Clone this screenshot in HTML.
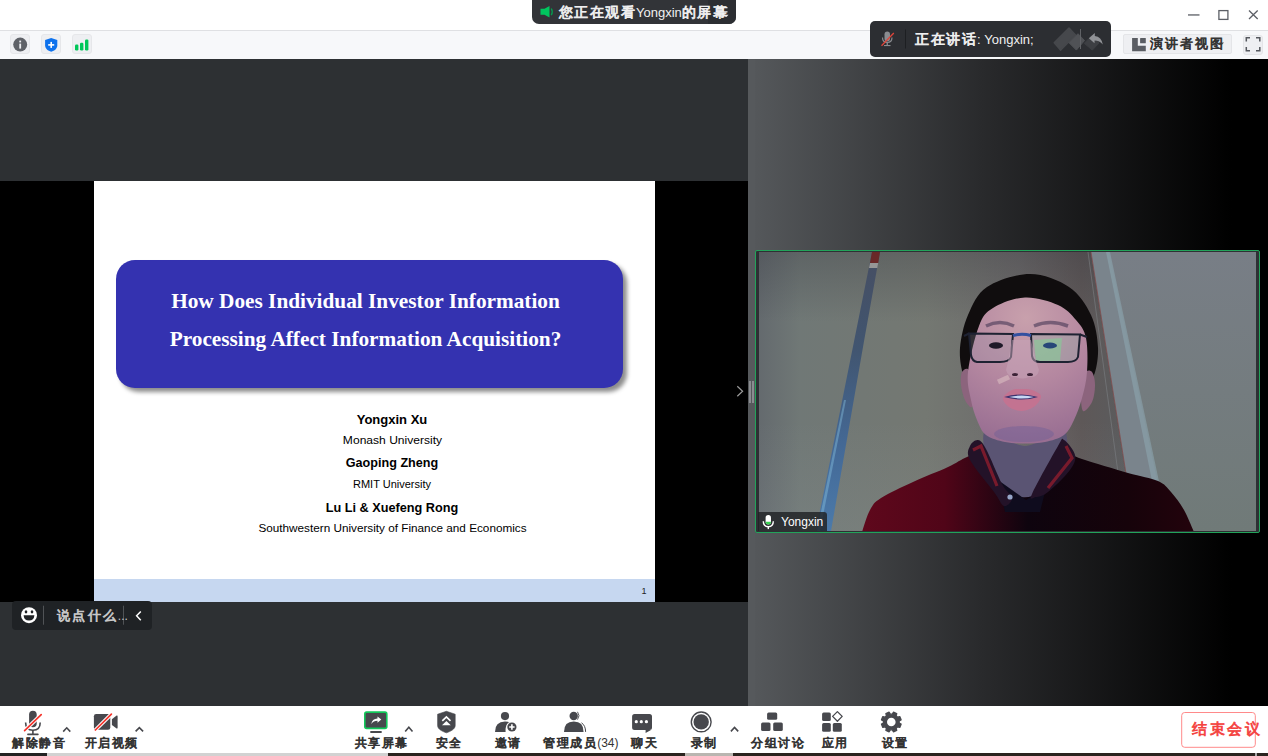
<!DOCTYPE html>
<html><head><meta charset="utf-8">
<style>
*{box-sizing:border-box;margin:0;padding:0}
html,body{width:1268px;height:756px;overflow:hidden;background:#fff;font-family:"Liberation Sans",sans-serif}
.a{position:absolute}
.cjk{white-space:nowrap}
.cjk span[style*="letter-spacing"]{-webkit-text-stroke:.75px currentColor}
</style></head>
<body>
<!-- title bar -->
<div class="a" style="left:0;top:0;width:1268px;height:30px;background:#fff"></div>
<div class="a" style="left:0;top:30px;width:1268px;height:1px;background:#dfe0e3"></div>
<div class="a" style="left:0;top:31px;width:1268px;height:28px;background:#f7f8fa"></div>
<!-- toolbar icons -->
<div class="a" style="left:10px;top:34px;width:20px;height:20px;background:#eeeff2;border:1px solid #e6e7ea;border-radius:3px"></div>
<div class="a" style="left:41px;top:34px;width:20px;height:20px;background:#eeeff2;border:1px solid #e6e7ea;border-radius:3px"></div>
<div class="a" style="left:72px;top:34px;width:20px;height:20px;background:#eeeff2;border:1px solid #e6e7ea;border-radius:3px"></div>
<svg class="a" style="left:0;top:0" width="120" height="60">
  <circle cx="20.2" cy="44.6" r="7" fill="#5f6268"/>
  <rect x="19.3" y="43.6" width="1.8" height="5" fill="#eeeff2"/>
  <rect x="19.3" y="40.6" width="1.8" height="1.8" fill="#eeeff2"/>
  <path d="M51.2 38 L57.3 40 L57.3 45.5 C57.3 48.5 54.5 50.8 51.2 51.7 C47.9 50.8 45.1 48.5 45.1 45.5 L45.1 40 Z" fill="#0e72ed"/>
  <rect x="48.2" y="44.1" width="6" height="1.6" fill="#fff"/>
  <rect x="50.4" y="41.9" width="1.6" height="6" fill="#fff"/>
  <rect x="75" y="44.6" width="3.4" height="5.8" rx="1.2" fill="#00c759"/>
  <rect x="80" y="42.8" width="3.4" height="7.6" rx="1.2" fill="#00c759"/>
  <rect x="85" y="39.6" width="3.4" height="10.8" rx="1.2" fill="#00c759"/>
</svg>
<!-- title pill -->
<div class="a" style="left:532px;top:0;width:204px;height:24px;background:#323438;border-radius:0 0 7px 7px;overflow:hidden">
  <div class="a" style="left:176px;top:0;width:28px;height:24px;background:#2c2e32"></div>
</div>
<svg class="a" style="left:532px;top:0" width="204" height="24">
  <path d="M8.5 8.8 H12.5 L17.5 6 V17.6 L12.5 14.8 H8.5 Z" fill="#00c65e"/>
  <path d="M19.3 8.5 Q21.2 11.8 19.3 15.1" stroke="#00a050" stroke-width="1.3" fill="none"/>
  <path d="M21.5 7.2 Q24 11.8 21.5 16.4" stroke="#0a7a3e" stroke-width="1" fill="none" opacity=".0"/>
  <rect x="185.5" y="7" width="10" height="1.3" fill="#e8e8e8"/>
  <rect x="185.5" y="11.2" width="10" height="1.3" fill="#e8e8e8"/>
  <rect x="185.5" y="15.3" width="6" height="1.3" fill="#e8e8e8"/>
  <path d="M192.5 14.8 H196.5 L194.5 17 Z" fill="#e8e8e8"/>
</svg>
<div class="a cjk" style="left:559px;top:3.5px;height:16px;font-size:14px;line-height:16px;color:#f0f0f0"><span style="letter-spacing:1.4px">您正在观看</span><span style="font-size:13px">Yongxin</span><span style="letter-spacing:1.4px">的屏幕</span></div>
<!-- window controls -->
<svg class="a" style="left:1180px;top:0" width="88" height="30">
  <rect x="8" y="14.3" width="11.5" height="1.3" fill="#5c5f66"/>
  <rect x="38.9" y="10.6" width="9" height="8.8" fill="none" stroke="#5c5f66" stroke-width="1.3"/>
  <path d="M69 10.5 L77.7 19 M77.7 10.5 L69 19" stroke="#5c5f66" stroke-width="1.3"/>
</svg>
<!-- speaking tooltip -->
<div class="a" style="left:870px;top:21px;width:241px;height:36px;background:#2c2e32;border-radius:5px"></div>
<svg class="a" style="left:870px;top:21px" width="241" height="36">
  <rect x="14.5" y="10.5" width="5.5" height="10" rx="2.75" fill="#8a8c90"/>
  <path d="M12.5 16.5 Q12.5 21.5 17.25 21.5 Q22 21.5 22 16.5" stroke="#8a8c90" stroke-width="1.2" fill="none"/>
  <rect x="16.6" y="21.5" width="1.3" height="2.6" fill="#8a8c90"/>
  <rect x="14" y="24" width="6.5" height="1.1" fill="#8a8c90"/>
  <path d="M11.5 24.8 L23.8 12" stroke="#e0453a" stroke-width="1.3"/>
  <rect x="35" y="8.5" width="1" height="19" fill="#1d1f22"/>
  <path d="M184.2 21.7 L199 7 L205.5 14 L190.5 29.1 Z" fill="#46484c" stroke="#46484c" stroke-width="1.5" stroke-linejoin="round"/>
  <path d="M199 21.7 L208 12.7 L214.5 19.5 L206.4 29.1 Z" fill="#505256" stroke="#505256" stroke-width="1" stroke-linejoin="round"/>
  <path d="M214.3 22.3 L222 14.5 L229 22 L222.3 29.1 Z" fill="#3d3f43" stroke="#3d3f43" stroke-width="1" stroke-linejoin="round"/>
  <rect x="210" y="8" width="1" height="20" fill="#606266"/>
  <path d="M218.9 17.2 L224.8 12 L224.8 15 Q231.5 15.8 232.8 23.4 Q229.5 19.8 224.6 19.6 L224.5 22.3 Z" fill="#909296"/>
</svg>
<div class="a cjk" style="left:915px;top:31px;height:16px;font-size:14px;line-height:16px;color:#f0f0f0"><span style="letter-spacing:1.5px">正在讲话</span><span style="font-size:13px">: Yongxin;</span></div>
<!-- speaker view button -->
<div class="a" style="left:1123px;top:34px;width:109px;height:20px;background:#eeeff2;border:1px solid #e4e5e8;border-radius:2px"></div>
<svg class="a" style="left:1123px;top:34px" width="109" height="20">
  <path d="M9.1 3.9 H14.8 V11.8 H22.8 V17.3 H9.1 Z" fill="#5a5d63"/>
  <rect x="17.1" y="3.9" width="5.7" height="5.3" rx=".5" fill="#5a5d63"/>
  <path d="M95.5 8.4 H101 L98.25 11.6 Z" fill="#4f5258"/>
</svg>
<div class="a cjk" style="left:1149.5px;top:35.5px;height:16px;font-size:13px;line-height:16px;color:#333"><span style="letter-spacing:2.2px">演讲者视图</span></div>
<!-- fullscreen button -->
<div class="a" style="left:1243px;top:34.5px;width:20px;height:20px;background:#eeeff2;border:1px solid #e4e5e8;border-radius:3px"></div>
<svg class="a" style="left:1243px;top:34px" width="20" height="20">
  <path d="M3.3 7.5 V3.8 H7 M13 3.8 H16.8 V7.5 M16.8 13 V16.8 H13 M7 16.8 H3.3 V13" stroke="#55585e" stroke-width="1.5" fill="none"/>
</svg>

<!-- main left panel -->
<div class="a" style="left:0;top:59px;width:748px;height:647px;background:#2d3033"></div>
<div class="a" style="left:0;top:181px;width:748px;height:421px;background:#000"></div>
<!-- slide -->
<div class="a" id="slide" style="left:93.5px;top:181px;width:561px;height:421px;background:#fff;overflow:hidden">
  <div class="a" style="left:22.5px;top:79px;width:507px;height:128px;background:#3432b0;border-radius:19px;box-shadow:4px 4px 4px rgba(0,0,0,.45)"></div>
  <div class="a" style="left:-8.7px;top:100.5px;width:561px;text-align:center;color:#fff;font:bold 21.5px/38.6px 'Liberation Serif',serif;white-space:nowrap;transform:scaleX(.99)">How Does Individual Investor Information<br>Processing Affect Information Acquisition?</div>
  <div class="a" style="left:18px;top:0;width:561px;text-align:center;color:#000;white-space:nowrap">
    <div class="a" style="left:0;top:230.5px;width:561px;font:bold 13px 'Liberation Sans'">Yongxin Xu</div>
    <div class="a" style="left:0;top:253px;width:561px;font:11.3px 'Liberation Sans';transform:scaleX(1.068)">Monash University</div>
    <div class="a" style="left:0;top:274.5px;width:561px;font:bold 12.6px 'Liberation Sans'">Gaoping Zheng</div>
    <div class="a" style="left:0;top:296.5px;width:561px;font:11px 'Liberation Sans'">RMIT University</div>
    <div class="a" style="left:0;top:319.5px;width:561px;font:bold 12.7px 'Liberation Sans'">Lu Li &amp; Xuefeng Rong</div>
    <div class="a" style="left:0;top:341px;width:561px;font:11.3px 'Liberation Sans';transform:scaleX(1.039)">Southwestern University of Finance and Economics</div>
  </div>
  <div class="a" style="left:0;top:398px;width:561px;height:23px;background:#c6d7f0"></div>
  <div class="a" style="left:548px;top:405px;font:9px 'Liberation Sans';color:#222">1</div>
</div>

<!-- chat bar -->
<div class="a" style="left:12px;top:601px;width:140px;height:29px;background:#1f2225;border-radius:4px"></div>
<svg class="a" style="left:12px;top:601px" width="140" height="29">
  <circle cx="17" cy="14.2" r="8" fill="#fff"/>
  <ellipse cx="14" cy="10.8" rx="1.3" ry="1.6" fill="#1f2225"/>
  <ellipse cx="20" cy="10.8" rx="1.3" ry="1.6" fill="#1f2225"/>
  <path d="M11.6 14.3 H22.4 Q22 19.6 17 19.6 Q12 19.6 11.6 14.3 Z" fill="#1f2225"/>
  <rect x="31" y="4.7" width="1" height="19" fill="#505356"/>
  <rect x="111" y="4.7" width="1" height="19" fill="#505356"/>
  <path d="M128.8 10.4 L124.6 14.8 L128.8 19.2" fill="none" stroke="#fff" stroke-width="1.5"/>
</svg>
<div class="a cjk" style="left:57.4px;top:608.5px;font-size:13px;line-height:14px;color:#c8c8c8"><span style="letter-spacing:2.1px">说点什么</span><span style="font-size:12px">...</span></div>

<!-- right panel -->
<div class="a" style="left:748px;top:59px;width:520px;height:647px;background:linear-gradient(to right,#56595c 0%,#292a2c 45%,#000 93%)"></div>
<div class="a" style="left:748px;top:59px;width:7px;height:647px;background:#56595c"></div>
<div class="a" style="left:749px;top:380.5px;width:2px;height:22px;background:#8a8c90"></div>
<div class="a" style="left:752px;top:380.5px;width:2px;height:22px;background:#8a8c90"></div>
<svg class="a" style="left:735px;top:380px" width="12" height="22">
  <path d="M2.3 6.2 L7.6 11.2 L2.3 16.2" fill="none" stroke="#9a9a9a" stroke-width="1.2"/>
</svg>
<!-- video -->
<div class="a" style="left:755px;top:250px;width:505px;height:283px;border:1px solid #22a35a;border-radius:2px;background:#2e3034"></div>
<div class="a" id="vid" style="left:759px;top:252px;width:497px;height:279px;overflow:hidden;background:#7e807a">
<svg width="497" height="279" viewBox="759 252 497 279" style="display:block">
  <defs>
    <linearGradient id="wallL" x1="759" x2="1130" y1="0" y2="0" gradientUnits="userSpaceOnUse">
      <stop offset="0" stop-color="rgb(100,106,110)"/>
      <stop offset=".11" stop-color="rgb(112,120,118)"/>
      <stop offset=".45" stop-color="rgb(116,120,114)"/>
      <stop offset=".7" stop-color="rgb(108,106,106)"/>
      <stop offset=".87" stop-color="rgb(94,88,88)"/>
      <stop offset="1" stop-color="rgb(90,92,94)"/>
    </linearGradient>
    <linearGradient id="wallV" x1="0" x2="0" y1="252" y2="531" gradientUnits="userSpaceOnUse">
      <stop offset="0" stop-color="rgb(40,40,50)" stop-opacity=".25"/>
      <stop offset=".25" stop-color="rgb(40,40,50)" stop-opacity="0"/>
      <stop offset=".6" stop-color="rgb(200,210,220)" stop-opacity="0"/>
      <stop offset="1" stop-color="rgb(200,215,220)" stop-opacity=".07"/>
    </linearGradient>
    <linearGradient id="pole" x1="0" x2="0" y1="252" y2="531" gradientUnits="userSpaceOnUse">
      <stop offset="0" stop-color="rgb(70,78,98)"/>
      <stop offset=".35" stop-color="rgb(65,85,112)"/>
      <stop offset=".7" stop-color="rgb(68,105,150)"/>
      <stop offset="1" stop-color="rgb(75,122,170)"/>
    </linearGradient>
    <radialGradient id="face" cx="1026" cy="318" r="130" gradientUnits="userSpaceOnUse">
      <stop offset="0" stop-color="rgb(200,160,172)"/>
      <stop offset=".5" stop-color="rgb(180,135,160)"/>
      <stop offset="1" stop-color="rgb(150,108,145)"/>
    </radialGradient>
    <linearGradient id="sweater" x1="862" x2="1194" y1="0" y2="0" gradientUnits="userSpaceOnUse">
      <stop offset="0" stop-color="rgb(95,8,28)"/>
      <stop offset=".25" stop-color="rgb(80,5,24)"/>
      <stop offset=".5" stop-color="rgb(14,4,14)"/>
      <stop offset=".8" stop-color="rgb(22,3,10)"/>
      <stop offset="1" stop-color="rgb(35,3,12)"/>
    </linearGradient>
    <linearGradient id="wallR" x1="0" x2="0" y1="252" y2="531" gradientUnits="userSpaceOnUse">
      <stop offset="0" stop-color="rgb(120,126,134)"/>
      <stop offset="1" stop-color="rgb(112,122,120)"/>
    </linearGradient>
  </defs>
  <rect x="759" y="252" width="497" height="279" fill="url(#wallL)"/>
  <rect x="759" y="252" width="497" height="279" fill="url(#wallV)"/>
  <!-- right wall -->
  <path d="M1091 252 H1256 V531 H1150 L1127 480 Z" fill="url(#wallR)"/>
  <path d="M1091 252 L1109 252 L1158 484 L1127 480 Z" fill="rgb(122,132,140)"/>
  <path d="M1106 252 L1110 252 L1160 486 L1153 486 Z" fill="rgb(140,165,175)" opacity=".6"/>
  <path d="M1091 252 L1127 480" stroke="rgb(130,70,70)" stroke-width="1" opacity=".7"/>
  <path d="M1088 252 L1119 480" stroke="rgb(125,128,132)" stroke-width="1" opacity=".6"/>
  <!-- pole -->
  <path d="M872 252 L880 252 L863.7 343 L831 531 L816 531 L853.7 343 Z" fill="url(#pole)"/>
  <path d="M872 252 L880 252 L878.2 263 L870 263 Z" fill="rgb(105,40,40)"/>
  <path d="M870 263 L878.2 263 L877.3 268 L869 268 Z" fill="rgb(150,150,150)"/>
  <path d="M817 531 L820 531 L846 400 L844 400 Z" fill="rgb(140,200,230)" opacity=".4"/>
  <!-- sweater -->
  <path d="M862.0 532.0 C863.3 528.3 866.8 515.7 870.0 510.0 C873.2 504.3 873.8 502.7 881.0 498.0 C888.2 493.3 901.8 487.2 913.0 482.0 C924.2 476.8 939.0 471.2 948.0 467.0 C957.0 462.8 960.8 459.5 967.0 457.0 C973.2 454.5 975.3 452.8 985.0 452.0 C994.7 451.2 1012.2 452.0 1025.0 452.0 C1037.8 452.0 1052.5 450.8 1062.0 452.0 C1071.5 453.2 1071.0 455.5 1082.0 459.0 C1093.0 462.5 1115.3 469.3 1128.0 473.0 C1140.7 476.7 1150.8 477.8 1158.0 481.0 C1165.2 484.2 1166.7 487.2 1171.0 492.0 C1175.3 496.8 1180.2 503.3 1184.0 510.0 C1187.8 516.7 1192.3 528.3 1194.0 532.0 L1194 540 L862 540 Z" fill="url(#sweater)"/>
  <!-- neck -->
  <path d="M986.0 430.0 C992.2 426.8 1012.0 446.0 1025.0 446.0 C1038.0 446.0 1057.8 426.0 1064.0 430.0 C1070.2 434.0 1066.0 459.7 1062.0 470.0 C1058.0 480.3 1046.8 487.5 1040.0 492.0 C1033.2 496.5 1027.3 498.2 1021.0 497.0 C1014.7 495.8 1007.5 490.3 1002.0 485.0 C996.5 479.7 990.7 474.2 988.0 465.0 C985.3 455.8 979.8 433.2 986.0 430.0 Z" fill="rgb(90,84,115)"/>
  <!-- shirt under V -->
  <path d="M998 480 L1026 500 L1046 488 L1040 512 L1005 512 Z" fill="rgb(15,12,30)"/>
  <!-- collars -->
  <path d="M970.0 446.0 C971.3 442.7 975.3 439.5 978.0 440.0 C980.7 440.5 982.0 441.7 986.0 449.0 C990.0 456.3 997.7 475.8 1002.0 484.0 C1006.3 492.2 1011.7 494.3 1012.0 498.0 C1012.3 501.7 1007.0 507.0 1004.0 506.0 C1001.0 505.0 999.7 499.7 994.0 492.0 C988.3 484.3 974.0 467.7 970.0 460.0 C966.0 452.3 968.7 449.3 970.0 446.0 Z" fill="rgb(35,18,40)"/>
  <path d="M1064.0 440.0 C1066.8 441.5 1074.0 450.0 1075.0 455.0 C1076.0 460.0 1074.5 463.8 1070.0 470.0 C1065.5 476.2 1053.7 487.5 1048.0 492.0 C1042.3 496.5 1038.7 496.7 1036.0 497.0 C1033.3 497.3 1028.3 502.5 1032.0 494.0 C1035.7 485.5 1052.7 455.0 1058.0 446.0 C1063.3 437.0 1061.2 438.5 1064.0 440.0 Z" fill="rgb(35,18,40)"/>
  <path d="M973 450 L981 446 L997 486" fill="none" stroke="rgb(150,30,45)" stroke-width="3.2" opacity=".75"/>
  <path d="M1066 446 L1072 458 L1048 488" fill="none" stroke="rgb(150,30,45)" stroke-width="3.2" opacity=".75"/>
  <circle cx="1010" cy="497" r="2.6" fill="rgb(150,165,200)"/>
  <!-- hair -->
  <path d="M963.0 374.0 C961.3 369.0 959.2 357.8 960.0 348.0 C960.8 338.2 963.5 325.2 968.0 315.0 C972.5 304.8 976.7 293.8 987.0 287.0 C997.3 280.2 1016.3 274.0 1030.0 274.0 C1043.7 274.0 1058.8 280.2 1069.0 287.0 C1079.2 293.8 1086.2 304.8 1091.0 315.0 C1095.8 325.2 1097.5 338.0 1098.0 348.0 C1098.5 358.0 1096.2 370.0 1094.0 375.0 C1091.8 380.0 1096.3 380.5 1085.0 378.0 C1073.7 375.5 1045.2 360.0 1026.0 360.0 C1006.8 360.0 980.5 375.7 970.0 378.0 C959.5 380.3 964.7 379.0 963.0 374.0 Z" fill="rgb(16,13,14)"/>
  <!-- ears -->
  <path d="M969.0 370.0 C967.0 367.0 963.3 369.5 962.0 372.0 C960.7 374.5 960.5 380.3 961.0 385.0 C961.5 389.7 963.2 396.3 965.0 400.0 C966.8 403.7 970.5 408.7 972.0 407.0 C973.5 405.3 974.5 396.2 974.0 390.0 C973.5 383.8 971.0 373.0 969.0 370.0 Z" fill="rgb(140,100,125)"/>
  <path d="M1085.0 373.0 C1086.8 369.7 1090.3 370.0 1092.0 372.0 C1093.7 374.0 1095.0 380.0 1095.0 385.0 C1095.0 390.0 1094.0 397.7 1092.0 402.0 C1090.0 406.3 1084.8 412.7 1083.0 411.0 C1081.2 409.3 1080.7 398.3 1081.0 392.0 C1081.3 385.7 1083.2 376.3 1085.0 373.0 Z" fill="rgb(140,100,125)"/>
  <!-- face -->
  <path d="M968.0 372.0 C969.3 359.7 974.8 336.7 979.0 326.0 C983.2 315.3 985.3 312.8 993.0 308.0 C1000.7 303.2 1014.2 298.0 1025.0 297.5 C1035.8 297.0 1049.5 301.2 1058.0 305.0 C1066.5 308.8 1071.3 314.5 1076.0 320.0 C1080.7 325.5 1084.2 329.3 1086.0 338.0 C1087.8 346.7 1087.7 362.0 1087.0 372.0 C1086.3 382.0 1084.2 390.0 1082.0 398.0 C1079.8 406.0 1077.0 413.8 1074.0 420.0 C1071.0 426.2 1068.8 431.3 1064.0 435.0 C1059.2 438.7 1051.5 440.6 1045.0 442.0 C1038.5 443.4 1031.7 443.5 1025.0 443.5 C1018.3 443.5 1011.5 443.4 1005.0 442.0 C998.5 440.6 990.7 438.7 986.0 435.0 C981.3 431.3 979.5 425.8 977.0 420.0 C974.5 414.2 972.5 408.0 971.0 400.0 C969.5 392.0 966.7 384.3 968.0 372.0 Z" fill="url(#face)"/>
  <ellipse cx="1024" cy="434" rx="30" ry="8" fill="rgb(110,95,150)" opacity=".45"/>
  <!-- eyebrows -->
  <path d="M986 326 Q1000 319 1014 326" stroke="rgb(70,55,85)" stroke-width="3.5" fill="none" opacity=".6"/>
  <path d="M1034 326 Q1050 319 1068 326" stroke="rgb(70,55,85)" stroke-width="3.5" fill="none" opacity=".6"/>
  <!-- lenses -->
  <path d="M969 333.5 L1013 334 L1011 357 Q1009 362 1000 362 L977 362 Q972 361 971 355 Z" fill="rgb(150,150,170)" opacity=".25"/>
  <path d="M1031 334 L1080 334.5 L1078 357 Q1076 362 1068 362 L1040 362 Q1033 362 1032 356 Z" fill="rgb(140,180,170)" opacity=".3"/>
  <path d="M1034 340 L1062 338 L1060 362 L1036 362 Z" fill="rgb(130,210,150)" opacity=".55"/>
  <ellipse cx="996" cy="345.5" rx="7" ry="3.2" fill="rgb(30,25,40)"/>
  <ellipse cx="1050" cy="345.5" rx="7" ry="3" fill="rgb(40,70,120)"/>
  <!-- frames -->
  <path d="M969 333.5 L1013 334 L1011 357 Q1009 362 1000 362 L977 362 Q972 361 971 355 Z" fill="none" stroke="rgb(30,34,50)" stroke-width="2"/>
  <path d="M1031 334 L1080 334.5 L1078 357 Q1076 362 1068 362 L1040 362 Q1033 362 1032 356 Z" fill="none" stroke="rgb(30,34,50)" stroke-width="2"/>
  <path d="M1013 335.5 Q1022 333 1031 335.5" stroke="rgb(50,80,160)" stroke-width="3" fill="none"/>
  <path d="M1080 334.5 L1087 337" stroke="rgb(30,34,50)" stroke-width="2"/>
  <path d="M969 333.5 L964 336" stroke="rgb(30,34,50)" stroke-width="2"/>
  <!-- nose -->
  <path d="M1012 340 Q1008 362 1006 370 Q1008 378 1016 377 Q1022 380 1029 377 Q1038 378 1039 370 Q1036 362 1031 340 Z" fill="rgb(200,165,185)" opacity=".5"/>
  <ellipse cx="1015" cy="374.5" rx="3" ry="1.6" fill="rgb(60,35,55)"/>
  <ellipse cx="1030" cy="374.5" rx="3" ry="1.6" fill="rgb(60,35,55)"/>
  <!-- mouth -->
  <path d="M1003.0 398.0 C1003.5 395.2 1008.8 391.5 1012.0 390.0 C1015.2 388.5 1018.7 389.0 1022.0 389.0 C1025.3 389.0 1028.8 388.8 1032.0 390.0 C1035.2 391.2 1040.5 393.3 1041.0 396.0 C1041.5 398.7 1038.2 403.5 1035.0 406.0 C1031.8 408.5 1026.3 410.8 1022.0 411.0 C1017.7 411.2 1012.2 409.2 1009.0 407.0 C1005.8 404.8 1002.5 400.8 1003.0 398.0 Z" fill="rgb(195,115,145)"/>
  <path d="M1004 397 Q1022 392 1038 397 Q1022 402 1004 397 Z" fill="rgb(60,50,110)"/>
  <path d="M1009 397 Q1022 394 1034 397 Q1022 400 1009 397 Z" fill="rgb(200,215,245)"/>
  <path d="M998 382 L1009 377" stroke="rgb(225,200,200)" stroke-width="5" fill="none" opacity=".5"/>
</svg>
</div>
<!-- name label -->
<div class="a" style="left:758px;top:512px;width:69px;height:19px;background:rgba(32,34,36,.82);border-radius:0 3px 0 0"></div>
<svg class="a" style="left:758px;top:512px" width="20" height="19">
  <rect x="7.6" y="3" width="5.4" height="9.5" rx="2.7" fill="#fff"/>
  <path d="M7.6 9.8 H13 V9.8 Q13 12.5 10.3 12.5 Q7.6 12.5 7.6 9.8 Z" fill="#39d353"/>
  <path d="M5.3 9.3 Q5.3 14.7 10.3 14.7 Q15.3 14.7 15.3 9.3" fill="none" stroke="#fff" stroke-width="1.4"/>
  <rect x="9.6" y="14.5" width="1.4" height="2.6" fill="#fff"/>
</svg>
<div class="a" style="left:781px;top:514.5px;font-size:12px;line-height:14px;color:#fff;white-space:nowrap">Yongxin</div>

<!-- bottom toolbar -->
<div class="a" style="left:0;top:706px;width:1268px;height:47px;background:#fff"></div>
<svg class="a" style="left:0;top:706px" width="1268" height="47">
  <g fill="#47484d">
  <!-- mic -->
  <rect x="29.1" y="4.7" width="7.6" height="16.5" rx="3.8"/>
  <path d="M25.6 16.5 Q25.6 24.3 32.9 24.3 Q40.2 24.3 40.2 16.5" fill="none" stroke="#47484d" stroke-width="1.6"/>
  <rect x="32.1" y="24" width="1.6" height="4"/>
  <rect x="27.1" y="27.6" width="11.6" height="1.6" rx=".8"/>
  </g>
  <path d="M24.6 24.6 L41.2 8.6" stroke="#fff" stroke-width="3.6"/>
  <path d="M24.6 24.6 L41.2 8.6" stroke="#f5332b" stroke-width="1.7" stroke-linecap="round"/>
  <!-- carets -->
  <g fill="none" stroke="#47484d" stroke-width="1.6">
  <path d="M63.2 25.6 L66.75 21.8 L70.3 25.6"/>
  <path d="M135.6 25.4 L139.35 21.6 L143.1 25.4"/>
  <path d="M405.2 25.6 L408.85 21.3 L412.5 25.6"/>
  <path d="M730.9 25.4 L734.55 21.5 L738.2 25.4"/>
  </g>
  <!-- video -->
  <rect x="93.9" y="8.1" width="16.4" height="15.6" rx="2.2" fill="#47484d"/>
  <path d="M111.9 13.2 L116.6 9.6 Q117.6 9 117.6 10.4 V21.6 Q117.6 23 116.6 22.4 L111.9 19 Z" fill="#47484d"/>
  <path d="M95.4 24 L111.4 8.2" stroke="#fff" stroke-width="3.8"/>
  <path d="M95.4 24 L111.4 8.2" stroke="#f5332b" stroke-width="1.7" stroke-linecap="round"/>
  <!-- share -->
  <rect x="364.8" y="6.1" width="22" height="16.3" rx="1.8" fill="#47484d" stroke="#12c85a" stroke-width="1.6"/>
  <rect x="370.1" y="25.1" width="11.8" height="1.8" rx=".9" fill="#47484d"/>
  <path d="M371.3 18 Q372 12.6 377.5 12.4 L377.5 10.4 L381.3 13.6 L377.5 16.8 L377.5 14.8 Q373.5 14.8 371.3 18 Z" fill="#fff"/>
  <!-- shield -->
  <path d="M446.4 5.3 L455.2 8.2 V19.5 C455.2 23.2 450.5 25.4 446.4 26.8 C442.3 25.4 437.6 23.2 437.6 19.5 V8.2 Z" fill="#47484d" stroke="#47484d" stroke-width=".6" stroke-linejoin="round"/>
  <path d="M442.3 14.9 L446.4 11 L450.5 14.9" fill="none" stroke="#fff" stroke-width="1.7"/>
  <path d="M446.4 15 L450.8 19.3 H442 Z" fill="#fff"/>
  <!-- invite -->
  <circle cx="505" cy="10.1" r="4.1" fill="#47484d"/>
  <path d="M495 25.9 Q495 15.4 505 15.4 Q508.3 15.4 510.2 16.6 Q505 18 505.6 25.9 Z" fill="#47484d"/>
  <circle cx="511.9" cy="21" r="5.6" fill="#fff"/>
  <circle cx="511.9" cy="21" r="4.6" fill="#47484d"/>
  <path d="M509.2 21 H514.6 M511.9 18.3 V23.7" stroke="#fff" stroke-width="1.6"/>
  <!-- participants -->
  <circle cx="573.7" cy="10" r="4.2" fill="#47484d"/>
  <path d="M564 25.9 Q564 15.5 573.8 15.5 Q583.6 15.5 583.6 25.9 Z" fill="#47484d"/>
  <path d="M577.5 5.8 Q580.5 9.7 577.5 13.6" fill="none" stroke="#47484d" stroke-width=".9"/>
  <path d="M581.5 16.8 Q585.6 19.5 585.6 25.9" fill="none" stroke="#47484d" stroke-width="1"/>
  <!-- chat -->
  <path d="M634.6 8 H649.5 Q652 8 652 10.5 V21.6 Q652 24.1 649.5 24.1 H651 L645.6 27 V24.1 H634.6 Q632.1 24.1 632.1 21.6 V10.5 Q632.1 8 634.6 8 Z" fill="#47484d"/>
  <circle cx="636.3" cy="15.7" r="1.6" fill="#fff"/>
  <circle cx="641.3" cy="15.7" r="1.6" fill="#fff"/>
  <circle cx="646.4" cy="15.7" r="1.6" fill="#fff"/>
  <!-- record -->
  <circle cx="701.2" cy="15.9" r="9.9" fill="none" stroke="#47484d" stroke-width="1.4"/>
  <circle cx="701.2" cy="15.9" r="7.7" fill="#47484d"/>
  <!-- breakout -->
  <rect x="767.1" y="6.4" width="10.1" height="7.3" rx="1.5" fill="#47484d"/>
  <rect x="761.1" y="16.4" width="9.4" height="8.7" rx="1.5" fill="#47484d"/>
  <rect x="773.2" y="16.4" width="9.6" height="8.7" rx="1.5" fill="#47484d"/>
  <!-- apps -->
  <rect x="822.1" y="6.4" width="8.7" height="8.7" rx="1.5" fill="#47484d"/>
  <rect x="822.1" y="17.1" width="8.7" height="8.7" rx="1.5" fill="#47484d"/>
  <rect x="832.8" y="17.1" width="9" height="8.7" rx="1.5" fill="#47484d"/>
  <path d="M837.4 5.6 L842.2 10.4 L837.4 15.2 L832.6 10.4 Z" fill="none" stroke="#47484d" stroke-width="1.3" stroke-linejoin="round"/>
  <!-- gear -->
  <g transform="translate(891.3 16)">
    <path d="M7.83 1.03 L9.76 2.16 L8.43 5.37 L6.27 4.81 L4.81 6.27 L5.37 8.43 L2.16 9.76 L1.03 7.83 L-1.03 7.83 L-2.16 9.76 L-5.37 8.43 L-4.81 6.27 L-6.27 4.81 L-8.43 5.37 L-9.76 2.16 L-7.83 1.03 L-7.83 -1.03 L-9.76 -2.16 L-8.43 -5.37 L-6.27 -4.81 L-4.81 -6.27 L-5.37 -8.43 L-2.16 -9.76 L-1.03 -7.83 L1.03 -7.83 L2.16 -9.76 L5.37 -8.43 L4.81 -6.27 L6.27 -4.81 L8.43 -5.37 L9.76 -2.16 L7.83 -1.03 Z" fill="#47484d" stroke="#47484d" stroke-width="1.4" stroke-linejoin="round"/>
    <circle r="4.3" fill="#fff"/>
  </g>
  <!-- end -->
  <rect x="1181.7" y="6.5" width="73.6" height="34.8" rx="3" fill="#fff" stroke="#ff8a8a" stroke-width="1"/>
  </g>
</svg>
<div class="a cjk" style="left:12px;top:736.5px;font-size:12px;line-height:13px;color:#333"><span style="letter-spacing:1.5px">解除静音</span></div>
<div class="a cjk" style="left:84.5px;top:736.5px;font-size:12px;line-height:13px;color:#333"><span style="letter-spacing:1.5px">开启视频</span></div>
<div class="a cjk" style="left:354.7px;top:736.5px;font-size:12px;line-height:13px;color:#333"><span style="letter-spacing:1.5px">共享屏幕</span></div>
<div class="a cjk" style="left:435.7px;top:736.5px;font-size:12px;line-height:13px;color:#333"><span style="letter-spacing:1.5px">安全</span></div>
<div class="a cjk" style="left:494.7px;top:736.5px;font-size:12px;line-height:13px;color:#333"><span style="letter-spacing:1.5px">邀请</span></div>
<div class="a cjk" style="left:543.2px;top:736.5px;font-size:12px;line-height:13px;color:#333"><span style="letter-spacing:1.5px">管理成员</span>(34)</div>
<div class="a cjk" style="left:631.3px;top:736.5px;font-size:12px;line-height:13px;color:#333"><span style="letter-spacing:1.5px">聊天</span></div>
<div class="a cjk" style="left:690.7px;top:736.5px;font-size:12px;line-height:13px;color:#333"><span style="letter-spacing:1.5px">录制</span></div>
<div class="a cjk" style="left:751px;top:736.5px;font-size:12px;line-height:13px;color:#333"><span style="letter-spacing:1.5px">分组讨论</span></div>
<div class="a cjk" style="left:821.7px;top:736.5px;font-size:12px;line-height:13px;color:#333"><span style="letter-spacing:1.5px">应用</span></div>
<div class="a cjk" style="left:881.5px;top:736.5px;font-size:12px;line-height:13px;color:#333"><span style="letter-spacing:1.5px">设置</span></div>
<div class="a cjk" style="left:1192px;top:721px;font-size:14.5px;line-height:17px;color:#f4433f"><span style="letter-spacing:2.5px">结束会议</span></div>
<div class="a" style="left:0;top:753px;width:1268px;height:3px;background:#2a241f"></div>
<div class="a" style="left:0;top:753px;width:47px;height:3px;background:#232323"></div>
<div class="a" style="left:47px;top:753px;width:341px;height:3px;background:#d2d2d2"></div>
<div class="a" style="left:685px;top:753px;width:48px;height:3px;background:#b9b6b1"></div>
<div class="a" style="left:1255px;top:753px;width:2px;height:3px;background:#a8a8a8"></div>
</body></html>
